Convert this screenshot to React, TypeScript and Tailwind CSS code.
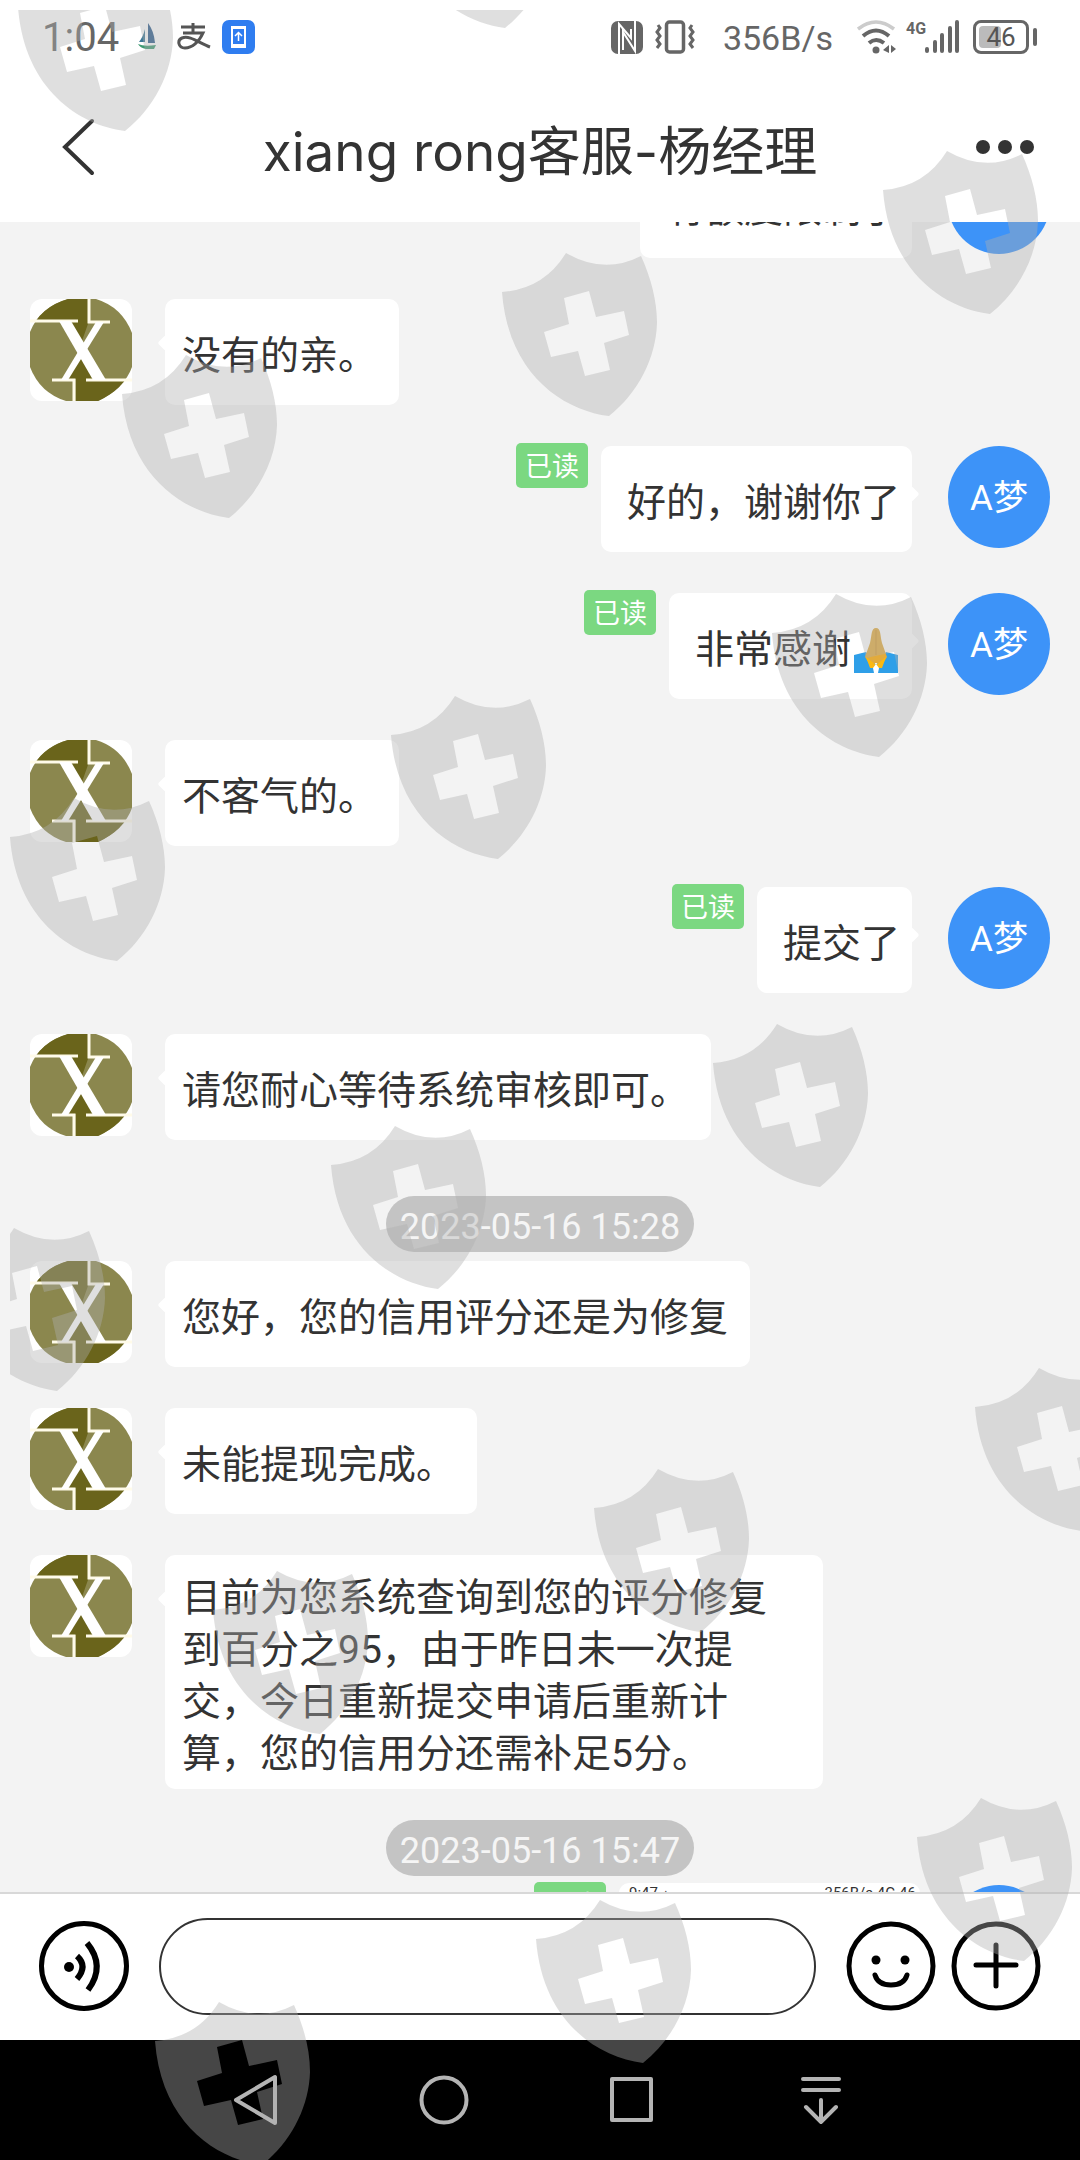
import type { ReactNode } from 'react';

const SHIELDS: [number, number][] = [
  [18, -32], [398, -135], [883, 151], [502, 253], [122, 355],
  [772, 594], [391, 696], [10, 798],
  [713, 1024], [331, 1126], [-50, 1228],
  [975, 1368], [594, 1469], [213, 1571],
  [917, 1798], [536, 1900], [155, 2002],
];

function Watermark() {
  return (
    <svg className="pointer-events-none absolute inset-0 h-full w-full" fill="#afafaf" fillOpacity="0.4" fillRule="evenodd" aria-hidden="true">
      <defs>
        <clipPath id="mark-area"><rect x="10" y="10" width="4000" height="4000" /></clipPath>
      </defs>
      <g clipPath="url(#mark-area)">
        {SHIELDS.map(([x, y]) => (
          <path
            key={`${x},${y}`}
            transform={`translate(${x} ${y})`}
            d="M0 39Q42 36 64 0Q102 22 139 3C149 25 155 48 155 70C154 105 136 140 107 163C60 157 6 120 0 39ZM62 45L67 71L42 79L49 104L76 98L83 123L108 117L102 90L127 82L122 58L94 64L87 38Z"
          />
        ))}
      </g>
    </svg>
  );
}

function StatusBar() {
  return (
    <div className="flex h-[74px] items-center justify-between pl-[42px] pr-[43px] text-[#666]">
      <div className="flex items-center">
        <span className="w-24 pt-[2px] text-[40px] leading-none">1:04</span>
        <svg className="mr-5" width="19" height="28" viewBox="0 0 19 28" aria-hidden="true">
          <path d="M10 0V20H17Q16 8 10 0Z" fill="#2b5a8a" />
          <path d="M7 6V19H1Q5 14 7 6Z" fill="#3c7896" />
          <path d="M0 21Q6 24 18 22L16 26H8Q2 25 0 21Z" fill="#3f9a72" />
        </svg>
        <svg className="mr-[11px]" width="34" height="28" viewBox="0 0 34 28" fill="none" stroke="#555" strokeWidth="3" aria-hidden="true">
          <path d="M4 4H28M16 0V10M6 10H26C22 19 15 25 8 25C1 25 0 17 5 15C13 12 22 20 33 24" />
        </svg>
        <svg width="33" height="34" viewBox="0 0 33 34" aria-hidden="true">
          <rect width="33" height="34" rx="7" fill="#2f7df0" />
          <path d="M9 6H24V28H9Z" fill="#fff" />
          <path d="M11 9H22V24H11Z" fill="#2f7df0" />
          <path d="M16.500 21V13M13 16L16.500 12.500L20 16" fill="none" stroke="#fff" strokeWidth="1.500" />
        </svg>
      </div>
      <div className="flex items-center">
        <svg className="mr-3" width="32" height="33" viewBox="0 0 32 33" aria-hidden="true">
          <rect width="32" height="33" rx="7" fill="#666" />
          <path d="M8 33V3L20 17V8M12 29V11L24 30V0" fill="none" stroke="#fff" strokeWidth="2" />
        </svg>
        <svg className="mr-7" width="40" height="34" viewBox="0 0 40 34" fill="none" stroke="#666" strokeWidth="3" aria-hidden="true">
          <rect x="11.500" y="2" width="17" height="30" rx="3" strokeWidth="3.500" />
          <path d="M3 5L5 8L2 12L5 16L2 20L5 24L2 28M37 5L35 8L38 12L35 16L38 20L35 24L38 28" />
        </svg>
        <span className="mr-6 pt-[2px] text-[34px] leading-none">356B/s</span>
        <svg className="mr-[9px]" width="40" height="34" viewBox="0 0 40 34" fill="none" stroke="#666" strokeWidth="4" aria-hidden="true">
          <path d="M1 9Q19 -5 37 9" stroke="#ccc" strokeWidth="3.500" />
          <path d="M6 16Q19 5 32 16M12 23Q19 17 27 23" />
          <circle cx="19" cy="30" r="3.500" fill="#666" stroke="none" />
          <path d="M26 30L32 25V33M34 25L39 29L34 33" fill="#666" stroke="none" />
        </svg>
        <span className="mb-4 w-[19px] text-[16px] font-bold leading-none">4G</span>
        <svg className="mr-[13px]" width="35" height="34" viewBox="0 0 35 34" stroke="#666" strokeWidth="4" strokeLinecap="round" aria-hidden="true">
          <path d="M2 29V31M10 22V31M17 15V31M25 8V31M32 2V31" />
        </svg>
        <div className="relative flex h-[34px] w-[56px] items-center justify-center rounded-[8px] border-3 border-[#666]">
          <span className="absolute inset-y-[3px] left-[3px] w-[22px] rounded-sm bg-[#bbb]" />
          <span className="relative text-[26px] leading-none text-[#555]">46</span>
        </div>
        <span className="ml-1 h-[18px] w-1 rounded-full bg-[#666]" />
      </div>
    </div>
  );
}

function Header() {
  return (
    <header className="flex h-[148px] items-center justify-between pb-[2px] pl-[62px] pr-[46px]">
      <button type="button" aria-label="返回" className="flex h-20 w-[84px] items-center">
        <svg width="34" height="60" viewBox="0 0 34 60" fill="none" stroke="#333" strokeWidth="4" strokeLinecap="round">
          <path d="M30 4L3 30L30 56" />
        </svg>
      </button>
      <h1 className='pt-[10px] font-["Inter","Noto_Sans_CJK_SC",sans-serif] text-[53px] leading-[64px] text-[#333]'>xiang rong客服-杨经理</h1>
      <button type="button" aria-label="更多" className="flex h-20 w-[100px] items-center justify-end gap-2">
        <span className="size-[14px] rounded-full bg-[#333]" />
        <span className="size-[14px] rounded-full bg-[#333]" />
        <span className="size-[14px] rounded-full bg-[#333]" />
      </button>
    </header>
  );
}

function AgentAvatar() {
  return (
    <svg className="shrink-0 rounded-[12px]" width="102" height="102" viewBox="0 0 102 102" role="img" aria-label="X">
      <defs>
        <clipPath id="disc"><path d="M0 33Q10 8 38 0H66Q92 8 102 34V68Q94 90 68 102H36Q10 94 0 68Z" /></clipPath>
      </defs>
      <rect width="102" height="102" fill="#fff" />
      <g clipPath="url(#disc)">
        <rect width="102" height="102" fill="#8b874e" />
        <path d="M0 0H59V22L52 42L40 23H0Z" fill="#6a641b" />
        <path d="M46 102V80H36L51 59L66 81H102V102Z" fill="#6a641b" />
      </g>
      <path d="M0 22H48M59 0V23H80M22 81H44V102M56 81H102" fill="none" stroke="#fffbe9" strokeWidth="3" />
      <path d="M29 22H41L76 81H63Z" fill="#fff" />
      <path d="M66 23H74L38 81H31Z" fill="#fff" />
    </svg>
  );
}

function Agent({ children }: { children: ReactNode }) {
  return (
    <div className="mb-[41px] flex items-start px-[30px]">
      <AgentAvatar />
      <div className="relative ml-[33px] flex min-h-[106px] max-w-[658px] items-center rounded-[10px] bg-white pb-[9px] pl-[17px] pr-[22px] pt-[17px]">
        <span className="absolute -left-[5px] top-[38px] size-3 rotate-45 rounded-[2px] bg-white" />
        <p className="text-[39px] leading-[52px] text-[#333]">{children}</p>
      </div>
    </div>
  );
}

function ReadBadge() {
  return (
    <span className="-mt-[3px] mr-[13px] h-[45px] w-[72px] shrink-0 rounded-[5px] bg-[#7bd881] text-center text-[27px] leading-[48px] text-white">已读</span>
  );
}

function Me({ children, bubble = true, read = true }: { children: ReactNode; bubble?: boolean; read?: boolean }) {
  return (
    <div className="mb-[41px] flex items-start justify-end px-[30px]">
      {read && <ReadBadge />}
      {bubble ? (
        <div className="relative flex min-h-[106px] items-center rounded-[10px] bg-white pb-[9px] pl-[26px] pr-3 pt-[17px]">
          <span className="absolute -right-[5px] top-[42px] size-3 rotate-45 rounded-[2px] bg-white" />
          <p className="flex items-center text-[39px] leading-[52px] text-[#333]">{children}</p>
        </div>
      ) : (
        children
      )}
      <span className="ml-9 flex size-[102px] shrink-0 items-center justify-center rounded-full bg-[#3d93f8] pt-1 text-[35px] text-white">A梦</span>
    </div>
  );
}

function Time({ children }: { children: ReactNode }) {
  return (
    <div className="mb-[9px] flex justify-center">
      <time className="flex h-14 w-[308px] items-center justify-center rounded-full bg-[#c4c4c4] pt-[6px] text-[36px] leading-none text-[#f5f5f5]">{children}</time>
    </div>
  );
}

function PrayingHands() {
  return (
    <svg className="ml-[3px] mr-[2px]" width="44" height="46" viewBox="0 0 44 46" role="img" aria-label="双手合十">
      <path d="M0 28L12 25L22 38V46H0ZM44 28L32 25L22 38V46H44Z" fill="#2f9fe8" />
      <path d="M22 1C27 1 26 8 28 16L33 30L28 38L22 36L16 38L11 30L16 16C18 8 17 1 22 1Z" fill="#e2ab3c" />
      <path d="M22 3V28" stroke="#cb9330" strokeWidth="1" />
      <path d="M12 30L22 38L32 30L28 41H16Z" fill="#fbb911" />
      <path d="M22 37L25 41L24 46H20L19 41Z" fill="#fff" />
    </svg>
  );
}

function Chat() {
  return (
    <main className="h-[1670px] overflow-hidden bg-[#f3f3f3]">
      <div className="-mt-[70px]">
        <Me read={false}>有额度限制了</Me>
        <Agent>没有的亲。</Agent>
        <Me>好的，谢谢你了</Me>
        <Me>非常感谢<PrayingHands /></Me>
        <Agent>不客气的。</Agent>
        <Me>提交了</Me>
        <Agent>请您耐心等待系统审核即可。</Agent>
        <div className="pt-[15px]"><Time>2023-05-16 15:28</Time></div>
        <Agent>您好，您的信用评分还是为修复</Agent>
        <Agent>未能提现完成。</Agent>
        <Agent>目前为您系统查询到您的评分修复到百分之95，由于昨日未一次提交，今日重新提交申请后重新计算，您的信用分还需补足5分。</Agent>
        <div className="-mt-[10px]"><Time>2023-05-16 15:47</Time></div>
        <Me bubble={false}>
          <div className="-mr-2 -mt-[2px] flex h-[500px] w-[301px] justify-between rounded-[10px] bg-white pl-[10px] pr-1 pt-[3px] text-[15px] leading-none text-[#333]">
            <span>9:47 ▴</span>
            <span>356B/s 4G 46</span>
          </div>
        </Me>
      </div>
    </main>
  );
}

function Composer() {
  return (
    <form className="flex h-[148px] items-center border-t-2 border-[#d8d8d8] px-[38px] pb-[2px]" onSubmit={(e) => e.preventDefault()}>
      <button type="button" aria-label="语音" className="shrink-0">
        <svg width="92" height="92" viewBox="0 0 92 92" fill="none" stroke="#000" strokeWidth="5">
          <circle cx="46" cy="46" r="42.500" />
          <circle cx="31" cy="47" r="5" fill="#000" stroke="none" />
          <path d="M39 36Q50 46 39 59" strokeWidth="6" />
          <path d="M49 23Q68 46 50 70" strokeWidth="6" />
        </svg>
      </button>
      <input type="text" aria-label="输入消息" className="ml-[29px] h-[97px] min-w-0 flex-1 rounded-full border-2 border-[#333] px-10 text-[39px] outline-none" />
      <button type="button" aria-label="表情" className="ml-[29px] shrink-0">
        <svg width="92" height="92" viewBox="0 0 92 92" fill="none" stroke="#000" strokeWidth="5" strokeLinecap="round">
          <circle cx="46" cy="46" r="42" />
          <path d="M30 55Q33 65 46 65Q59 65 62 55" />
          <circle cx="31" cy="40" r="4.500" fill="#000" stroke="none" />
          <circle cx="60" cy="40" r="4.500" fill="#000" stroke="none" />
        </svg>
      </button>
      <button type="button" aria-label="添加" className="ml-[13px] shrink-0">
        <svg width="92" height="92" viewBox="0 0 92 92" fill="none" stroke="#000" strokeWidth="5" strokeLinecap="round">
          <circle cx="46" cy="46" r="42" />
          <path d="M46 25V66M26 45H66" />
        </svg>
      </button>
    </form>
  );
}

function NavBar() {
  return (
    <nav className="flex h-[120px] items-center bg-black pl-[226px]">
      <button type="button" aria-label="后退" className="w-[192px]">
        <svg width="60" height="54" viewBox="0 0 60 54" fill="none" stroke="#b4b4b4" strokeWidth="4" strokeLinejoin="round">
          <path d="M49 4V50L10 27Z" />
        </svg>
      </button>
      <button type="button" aria-label="主页" className="w-[190px]">
        <svg width="52" height="52" viewBox="0 0 52 52" fill="none" stroke="#b4b4b4" strokeWidth="4">
          <circle cx="26" cy="26" r="22.500" />
        </svg>
      </button>
      <button type="button" aria-label="最近任务" className="w-[190px]">
        <svg width="48" height="48" viewBox="0 0 48 48" fill="none" stroke="#b4b4b4" strokeWidth="4" strokeLinejoin="round">
          <path d="M4 3H43V44H4Z" />
        </svg>
      </button>
      <button type="button" aria-label="下拉通知">
        <svg width="44" height="48" viewBox="0 0 44 48" fill="none" stroke="#b4b4b4" strokeWidth="4" strokeLinecap="round">
          <path d="M5 3H41M5 14H41M23 24V45M8 31L23 46L38 31" />
        </svg>
      </button>
    </nav>
  );
}

export default function App() {
  return (
    <div className='relative w-full overflow-hidden bg-white font-["Roboto","Noto_Sans_CJK_SC",sans-serif]'>
      <StatusBar />
      <Header />
      <Chat />
      <Composer />
      <NavBar />
      <Watermark />
    </div>
  );
}
